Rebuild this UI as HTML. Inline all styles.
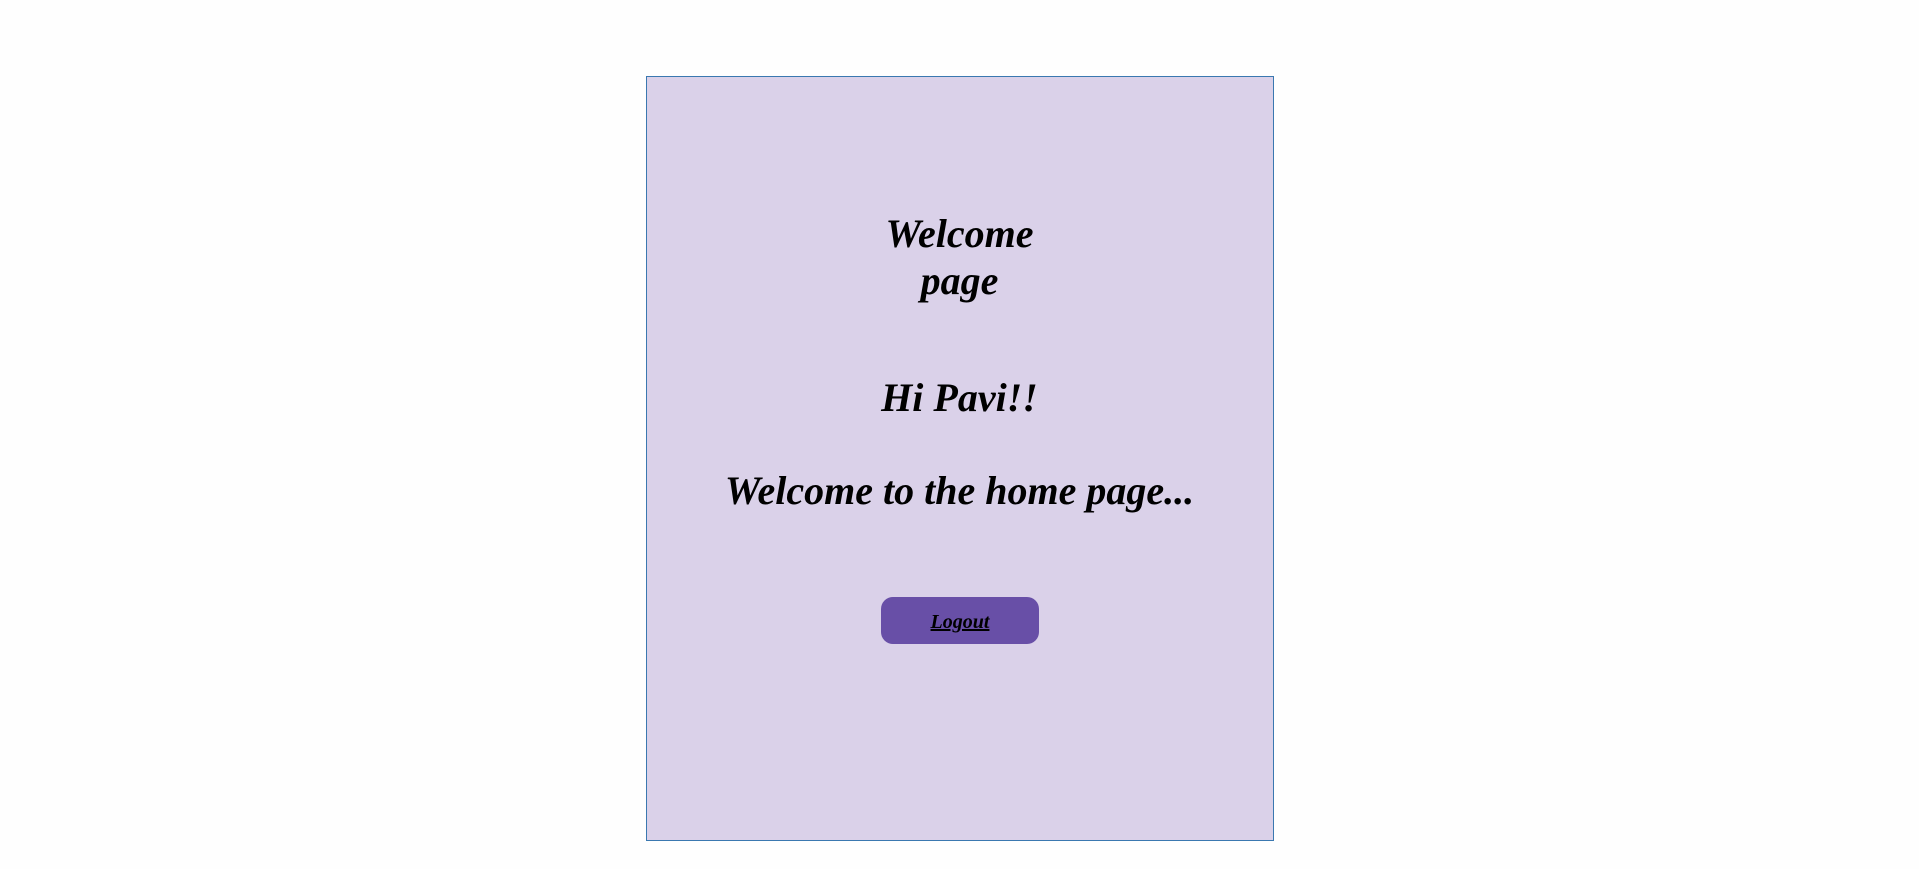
<!DOCTYPE html>
<html><head><style>
html,body{margin:0;padding:0;background:#fefefe;width:1919px;height:869px;overflow:hidden;}
.box{position:absolute;left:646px;top:76px;width:626px;height:763px;background:#dad1e9;border:1px solid #3a78b0;}
.t{position:absolute;left:0;width:1919px;text-align:center;font-family:"Liberation Serif",serif;font-weight:bold;font-style:italic;font-size:40px;line-height:48px;color:#000;}
.btn{position:absolute;left:881px;top:597px;width:158px;height:47px;background:#684fa7;border-radius:12px;text-align:center;line-height:50px;font-family:"Liberation Serif",serif;font-weight:bold;font-style:italic;font-size:20px;text-decoration:underline;color:#000;}
</style></head><body>
<div class="box"></div>
<div class="t" style="top:210px">Welcome</div>
<div class="t" style="top:257px">page</div>
<div class="t" style="top:374px">Hi Pavi!!</div>
<div class="t" style="top:467px">Welcome to the home page...</div>
<div class="btn">Logout</div>
</body></html>
